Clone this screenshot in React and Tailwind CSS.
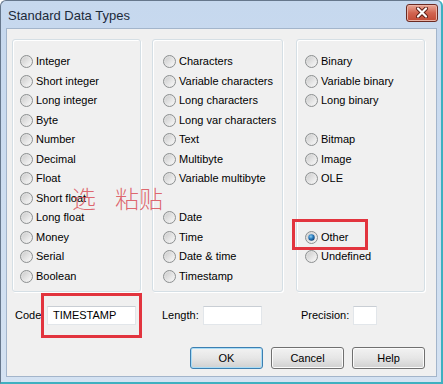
import React from "react";

function Radio({ checked }) {
  return (
    <svg width="13" height="13" viewBox="0 0 13 13" className="shrink-0">
      <circle cx="6.5" cy="6.5" r="6" fill="url(#rOuter)" stroke="#8d9091" strokeWidth="1" />
      <circle cx="6.5" cy="6.5" r="4.3" fill="url(#rInner)" />
      {checked && <circle cx="6.5" cy="6.5" r="3.2" fill="url(#rDot)" />}
    </svg>
  );
}

function Row({ label, checked }) {
  return (
    <div className="h-[19.5px] flex items-center gap-[3px]">
      {label !== null && (
        <>
          <Radio checked={checked} />
          <span className="leading-none whitespace-nowrap">{label}</span>
        </>
      )}
    </div>
  );
}

function Group({ items, width, pl, ml }) {
  return (
    <div
      className="h-[253px] border border-[#d5dfe5] rounded-[3px] shadow-[inset_1px_1px_0_#ffffff,1px_1px_0_#ffffff] pt-[12px] flex flex-col shrink-0"
      style={{ width, paddingLeft: pl, marginLeft: ml }}
    >
      {items.map((it, i) =>
        it === null ? (
          <Row key={i} label={null} />
        ) : (
          <Row key={i} label={it.l} checked={it.c} />
        )
      )}
    </div>
  );
}

const g1 = [
  "Integer",
  "Short integer",
  "Long integer",
  "Byte",
  "Number",
  "Decimal",
  "Float",
  "Short float",
  "Long float",
  "Money",
  "Serial",
  "Boolean",
].map((l) => ({ l }));

const g2 = [
  { l: "Characters" },
  { l: "Variable characters" },
  { l: "Long characters" },
  { l: "Long var characters" },
  { l: "Text" },
  { l: "Multibyte" },
  { l: "Variable multibyte" },
  null,
  { l: "Date" },
  { l: "Time" },
  { l: "Date & time" },
  { l: "Timestamp" },
];

const g3 = [
  { l: "Binary" },
  { l: "Variable binary" },
  { l: "Long binary" },
  null,
  { l: "Bitmap" },
  { l: "Image" },
  { l: "OLE" },
  null,
  null,
  { l: "Other", c: true },
  { l: "Undefined" },
];

function Input({ w, value }) {
  return (
    <div
      className="h-[19px] bg-white border border-[#e2e6ea] border-t-[#c9ced4] flex items-center pl-[5px] shrink-0"
      style={{ width: w }}
    >
      {value && <span className="leading-none">{value}</span>}
    </div>
  );
}

function Button({ children, focused }) {
  return (
    <div
      className={
        "w-[73px] h-[22px] rounded-[3px] flex items-center justify-center bg-linear-to-b from-[#f2f2f2] via-[#e6e6e6] to-[#d0d0d0] " +
        (focused
          ? "border border-[#3c7fb1] shadow-[inset_0_0_0_1px_#a9dcf6]"
          : "border border-[#707070] shadow-[inset_0_0_0_1px_#fbfbfb]")
      }
    >
      <span className="leading-none">{children}</span>
    </div>
  );
}

export default function App() {
  return (
    <div className="w-[443px] h-[384px] relative overflow-hidden font-['Liberation_Sans',Arial,sans-serif] text-[11px] text-black bg-linear-to-b from-[#c6d8ee] to-[#d4e2f2] border-l border-t border-[#66778c] border-r-[#3fb0c0] border-b-[#3fb0c0] border-r-2 border-b-2 rounded-t-[6px] flex flex-col">
      <svg width="0" height="0" className="absolute">
        <defs>
          <linearGradient id="rOuter" x1="0" y1="0" x2="1" y2="1">
            <stop offset="0" stopColor="#d6d6d6" />
            <stop offset="1" stopColor="#f4f4f4" />
          </linearGradient>
          <linearGradient id="rInner" x1="0" y1="0" x2="1" y2="1">
            <stop offset="0" stopColor="#cdcdcd" />
            <stop offset="1" stopColor="#f7f7f7" />
          </linearGradient>
          <radialGradient id="rDot" cx="0.4" cy="0.35" r="0.7">
            <stop offset="0" stopColor="#8fd0f2" />
            <stop offset="0.5" stopColor="#2a7cbf" />
            <stop offset="1" stopColor="#0d3d6e" />
          </radialGradient>
        </defs>
      </svg>

      {/* Title bar */}
      <div className="h-[27px] flex items-center justify-between shrink-0">
        <span className="ml-[7px] text-[13px] text-[#1c2a3a] leading-none mt-[1px]">Standard Data Types</span>
        <div className="mr-[3px] mb-[4px] w-[32px] h-[18px] rounded-[3px] border border-[#6b2a22] bg-linear-to-b from-[#e8a796] via-[#d16450] to-[#c24a35] flex items-center justify-center shadow-[inset_0_0_0_1px_#eab3a6]">
          <svg width="14" height="11" viewBox="0 0 14 11">
            <path d="M3 1.5 L11 9.5 M11 1.5 L3 9.5" stroke="#5a1d15" strokeWidth="4" strokeLinecap="round" />
            <path d="M3 1.5 L11 9.5 M11 1.5 L3 9.5" stroke="#ffffff" strokeWidth="2.2" strokeLinecap="round" />
          </svg>
        </div>
      </div>

      {/* Client area */}
      <div className="ml-[5px] mr-[4px] mb-[5px] h-[349px] bg-[#f0f0f0] border border-[#a3b5cb] flex flex-col shrink-0">
        <div className="flex mt-[10px]">
          <Group items={g1} width={129} pl={7} ml={5} />
          <Group items={g2} width={131} pl={10} ml={11} />
          <Group items={g3} width={129} pl={8} ml={13} />
        </div>

        <div className="flex items-center mt-[14px] h-[19px]">
          <span className="ml-[8px] w-[32px] leading-none">Code:</span>
          <Input w={89} value="TIMESTAMP" />
          <span className="ml-[26px] w-[41px] leading-none">Length:</span>
          <Input w={59} />
          <span className="ml-[39px] w-[52px] leading-none">Precision:</span>
          <Input w={24} />
        </div>

        <div className="flex justify-end gap-[8px] mt-[22px] mr-[11px]">
          <Button focused>OK</Button>
          <Button>Cancel</Button>
          <Button>Help</Button>
        </div>
      </div>

      {/* annotation overlays */}
      <div className="absolute left-[40px] top-[292px] w-[101px] h-[45px] border-[3px] border-[#e2343e]" />
      <div className="absolute left-[291px] top-[218px] w-[76px] h-[31px] border-[3px] border-[#e2343e]" />
      <div className="absolute left-[71px] top-[185px] text-[24px] leading-none text-[#d8424c]/80 font-['Noto_Sans_CJK_SC',sans-serif] font-light whitespace-nowrap flex">
        <span>选</span>
        <span className="ml-[19px]">粘贴</span>
      </div>
    </div>
  );
}
